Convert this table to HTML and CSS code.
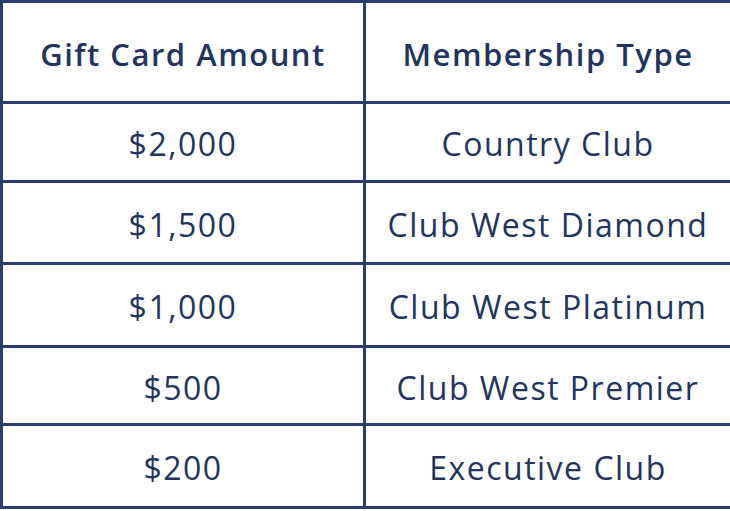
FILE: index.html
```html
<!DOCTYPE html>
<html>
<head>
<meta charset="utf-8">
<link rel="stylesheet" href="styles.css">
</head>
<body>
<table class="rates">
  <colgroup><col class="c1"><col class="c2"></colgroup>
  <thead>
    <tr class="r0"><th>Gift Card Amount</th><th>Membership Type</th></tr>
  </thead>
  <tbody>
    <tr class="r1"><td>$2,000</td><td>Country Club</td></tr>
    <tr class="r2"><td>$1,500</td><td>Club West Diamond</td></tr>
    <tr class="r3"><td>$1,000</td><td>Club West Platinum</td></tr>
    <tr class="r4"><td>$500</td><td>Club West Premier</td></tr>
    <tr class="r5"><td>$200</td><td>Executive Club</td></tr>
  </tbody>
</table>
</body>
</html>
```
FILE: styles.css
```css
html, body {
  margin: 0;
  padding: 0;
  background: #ffffff;
}
.rates {
  border-collapse: collapse;
  width: 730px;
  table-layout: fixed;
  font-family: "Open Sans", "Lato", sans-serif;
  color: #22345f;
}
.rates .c1 { width: 363px; }
.rates .c2 { width: 367px; }
.rates th, .rates td {
  border: 3px solid #2b3d6b;
  text-align: center;
  vertical-align: middle;
  padding: 0;
  white-space: nowrap;
}
.rates th {
  font-size: 31px;
  font-weight: 600;
  letter-spacing: 1.5px;
  padding-top: 4px;
}
.rates td {
  font-size: 32px;
  font-weight: 400;
  letter-spacing: 1.5px;
  padding-top: 3px;
}
.r0 { height: 101px; }
.r1 { height: 79px; }
.r2 { height: 82px; }
.r3 { height: 83px; }
.r4 { height: 78px; }
.r5 { height: 83px; }
```
